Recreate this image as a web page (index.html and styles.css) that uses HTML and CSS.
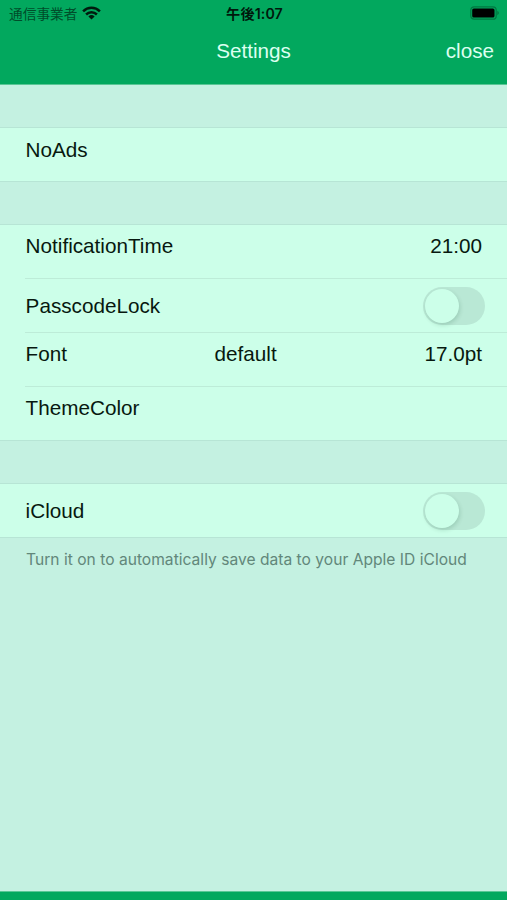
FILE: index.html
```html
<!DOCTYPE html>
<html lang="en">
<head>
<meta charset="utf-8">
<title>Settings</title>
<link rel="stylesheet" href="styles.css">
</head>
<body>
<div class="screen">
  <header class="header">
    <div class="status">
      <div class="carrier"><span class="carrier-name" lang="ja">通信事業者</span>
        <svg class="wifi" viewBox="0 0 19 14" width="19" height="14"><g fill="none" stroke="#001b0e" stroke-width="2.5"><path d="M1.1 5.3a12 12 0 0 1 16.8 0"/><path d="M4.1 8.5a7.7 7.7 0 0 1 10.8 0"/></g><path d="M6.4 10.5a4.5 4.5 0 0 1 6.2 0L9.5 13.6z" fill="#001b0e"/></svg>
      </div>
      <span class="time" lang="ja">午後1:07</span>
      <svg class="battery" viewBox="0 0 30 14" width="30" height="14"><rect x=".8" y=".8" width="25.4" height="12.4" rx="3.3" fill="none" stroke="#007841" stroke-width="1.2"/><rect x="2.2" y="2.4" width="22.3" height="9.2" rx="1.7" fill="#000"/><path d="M27.3 4.8q3.2 2.2 0 4.4z" fill="#007841"/></svg>
    </div>
    <nav class="nav"><h1>Settings</h1><button class="close">close</button></nav>
  </header>
  <main>
    <section class="group"><div class="row"><span>NoAds</span></div></section>
    <section class="group options">
      <div class="row"><span>NotificationTime</span><span class="value">21:00</span></div>
      <div class="row centered"><span>PasscodeLock</span><span class="switch"><i></i></span></div>
      <div class="row font-row"><span>Font</span><span>default</span><span class="value">17.0pt</span></div>
      <div class="row"><span>ThemeColor</span></div>
    </section>
    <section class="group"><div class="row centered"><span>iCloud</span><span class="switch"><i></i></span></div></section>
    <p class="note">Turn it on to automatically save data to your Apple ID iCloud</p>
  </main>
  <footer class="footer"></footer>
</div>
</body>
</html>
```
FILE: styles.css
```css
* { box-sizing: border-box; }
body { margin: 0; }
.screen {
  height: 900px;
  display: flex;
  flex-direction: column;
  background: #c4f1e1;
  color: #07180f;
  font: 20.7px "Liberation Sans", sans-serif;
  overflow: hidden;
}
.header {
  height: 85px;
  flex: none;
  background: #02a85e;
  border-bottom: 1px solid #59c795;
}
.status {
  height: 28px;
  display: grid;
  grid-template-columns: 1fr auto 1fr;
  align-items: center;
  padding: 0 7px 0 9px;
  font: 13.7px/28px Inter, "Noto Sans CJK JP", sans-serif;
  white-space: nowrap;
}
.carrier { display: flex; align-items: center; gap: 5px; }
.carrier-name { color: #004d2a; }
.wifi { margin-top: -3px; }
.time { font-size: 14.2px; font-weight: 600; letter-spacing: .1px; color: #00180c; }
.battery { justify-self: end; margin-top: -2px; }
.nav {
  height: 46px;
  display: grid;
  grid-template-columns: 1fr auto 1fr;
  align-items: center;
  padding: 0 13px;
  color: #dcfff0;
}
.nav h1 { grid-column: 2; margin: 0; font-size: 20.7px; font-weight: 400; }
.close { justify-self: end; padding: 0; border: 0; background: none; color: inherit; font: inherit; }
main { flex: 1; padding-top: 42px; }
.group {
  background: #ccffe9;
  border-top: 1px solid #b7e5d5;
  border-bottom: 1px solid #b7e5d5;
  margin-bottom: 42px;
}
.row {
  height: 54px;
  margin-left: 25px;
  padding: 0 25px 0 .6px;
  display: flex;
  justify-content: space-between;
  line-height: 44px;
}
.row:first-child { height: 53px; }
.row + .row { border-top: 1px solid #bdecd8; }
.options .row { line-height: 42px; }
.group .row.centered { align-items: center; line-height: 52px; padding-right: 22px; }
.font-row { display: grid; grid-template-columns: 189px 1fr auto; }
.switch {
  width: 62.5px;
  height: 38px;
  padding: 2px;
  border-radius: 19px;
  background: #b9e8d5;
}
.switch i {
  display: block;
  width: 34px;
  height: 34px;
  border-radius: 50%;
  background: #ccffe9;
  box-shadow: 1px 2px 4px rgba(0, 70, 40, .16);
}
.note {
  margin: -30px 0 0 26px;
  font: 15.6px/20px Inter, sans-serif;
  letter-spacing: .01px;
  color: #62877a;
  white-space: nowrap;
}
.footer { height: 9px; flex: none; background: #02a85e; border-top: 1px solid #59c795; }
```
